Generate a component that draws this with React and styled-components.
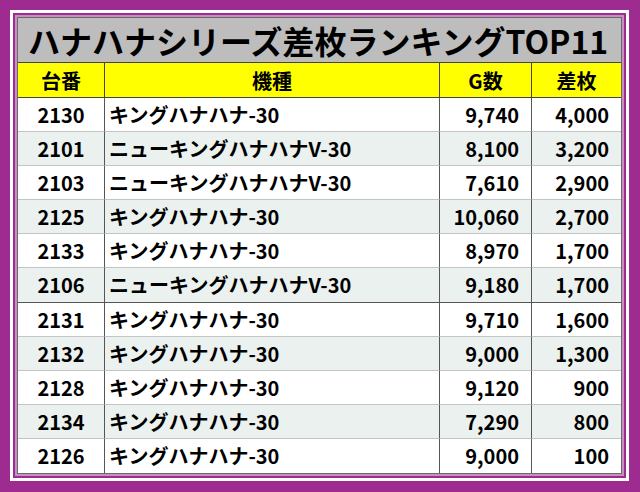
import React from "react";
import styled, { createGlobalStyle } from "styled-components";

const Global = createGlobalStyle`
  html, body { margin: 0; padding: 0; }
  body { background: #9e2b90; font-family: "Noto Sans CJK JP", "Noto Sans", sans-serif; }
`;

const Page = styled.div`
  width: 640px;
  height: 492px;
  box-sizing: border-box;
  padding: 10px 11px 11px 10px;
  background: #9e2b90;
`;

const WhiteFrame = styled.div`
  height: 100%;
  box-sizing: border-box;
  border: 3px solid #ffffff;
  background: #9e2b90;
  padding: 2px;
`;

const InnerFrame = styled.div`
  height: 100%;
  box-sizing: border-box;
  border: 2px solid #c98ec2;
  background: #c98ec2;
`;

const Table = styled.div`
  display: grid;
  grid-template-columns: 86px 335px 92px 1fr;
  grid-template-rows: 45px 35px repeat(11, 1fr);
  height: 100%;
  box-sizing: border-box;
  border: 1px solid #6a6a6a;
  background: #fff;
`;

const Title = styled.div`
  grid-column: 1 / -1;
  background: #bdbdbd;
  border-bottom: 1px solid #444;
  display: flex;
  align-items: center;
  padding-left: 10px;
  font-size: 32px;
  font-weight: 700;
  color: #000;
  white-space: nowrap;
`;

const Head = styled.div`
  background: #ffff00;
  display: flex;
  align-items: center;
  justify-content: center;
  font-size: 20px;
  font-weight: 700;
  color: #000;
  border-left: ${(p) => (p.$first ? "none" : "1px solid #444")};
  border-bottom: 1px solid #444;
`;

const Cell = styled.div`
  background: ${(p) => (p.$alt ? "#ebf1ee" : "#ffffff")};
  display: flex;
  align-items: center;
  justify-content: ${(p) =>
    p.$align === "right" ? "flex-end" : p.$align === "center" ? "center" : "flex-start"};
  padding: ${(p) => (p.$align === "right" ? "0 12px 0 0" : p.$align === "left" ? "0 0 0 4px" : "0")};
  font-size: 20px;
  font-weight: 700;
  color: #000;
  border-left: ${(p) => (p.$first ? "none" : "1px solid #555")};
  border-bottom: ${(p) => (p.$last ? "none" : p.$dark ? "1px solid #555" : "1px solid #c4c4c4")};
  white-space: nowrap;
`;

const rows = [
  ["2130", "キングハナハナ-30", "9,740", "4,000"],
  ["2101", "ニューキングハナハナV-30", "8,100", "3,200"],
  ["2103", "ニューキングハナハナV-30", "7,610", "2,900"],
  ["2125", "キングハナハナ-30", "10,060", "2,700"],
  ["2133", "キングハナハナ-30", "8,970", "1,700"],
  ["2106", "ニューキングハナハナV-30", "9,180", "1,700"],
  ["2131", "キングハナハナ-30", "9,710", "1,600"],
  ["2132", "キングハナハナ-30", "9,000", "1,300"],
  ["2128", "キングハナハナ-30", "9,120", "900"],
  ["2134", "キングハナハナ-30", "7,290", "800"],
  ["2126", "キングハナハナ-30", "9,000", "100"],
];

export default function App() {
  return (
    <>
      <Global />
      <Page>
        <WhiteFrame>
          <InnerFrame>
            <Table>
              <Title>ハナハナシリーズ差枚ランキングTOP11</Title>
              <Head $first>台番</Head>
              <Head>機種</Head>
              <Head>G数</Head>
              <Head>差枚</Head>
              {rows.map((r, i) => {
                const alt = i % 2 === 1;
                const last = i === rows.length - 1;
                const dark = i === 5;
                return (
                  <React.Fragment key={i}>
                    <Cell $first $alt={alt} $last={last} $dark={dark} $align="center">{r[0]}</Cell>
                    <Cell $alt={alt} $last={last} $dark={dark} $align="left">{r[1]}</Cell>
                    <Cell $alt={alt} $last={last} $dark={dark} $align="right">{r[2]}</Cell>
                    <Cell $alt={alt} $last={last} $dark={dark} $align="right">{r[3]}</Cell>
                  </React.Fragment>
                );
              })}
            </Table>
          </InnerFrame>
        </WhiteFrame>
      </Page>
    </>
  );
}
